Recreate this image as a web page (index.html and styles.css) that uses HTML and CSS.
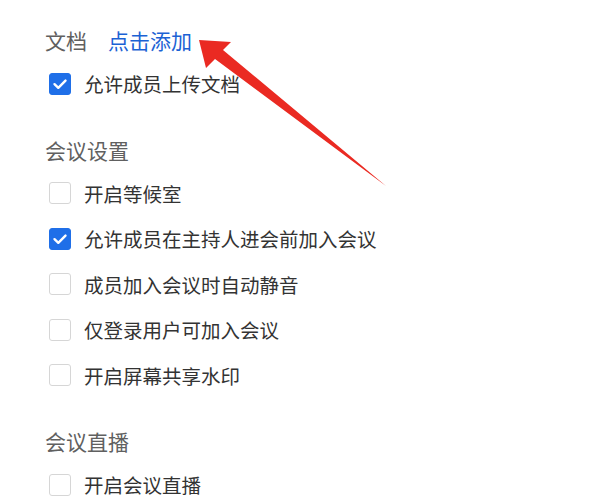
FILE: index.html
```html
<!DOCTYPE html>
<html lang="zh-CN">
<head>
<meta charset="utf-8">
<title>会议设置</title>
<link rel="stylesheet" href="styles.css">
</head>
<body>
<div class="page">
  <section class="section">
    <div class="section-title">文档<a class="add-link">点击添加</a></div>
    <label class="option"><span class="box checked"><svg viewBox="0 0 22 22" width="22" height="22"><path d="M5.5 11.2 L9.3 14.8 L16.5 7.6" fill="none" stroke="#fff" stroke-width="2.4" stroke-linecap="round" stroke-linejoin="round"/></svg></span>允许成员上传文档</label>
  </section>
  <section class="section">
    <div class="section-title">会议设置</div>
    <label class="option"><span class="box"></span>开启等候室</label>
    <label class="option"><span class="box checked"><svg viewBox="0 0 22 22" width="22" height="22"><path d="M5.5 11.2 L9.3 14.8 L16.5 7.6" fill="none" stroke="#fff" stroke-width="2.4" stroke-linecap="round" stroke-linejoin="round"/></svg></span>允许成员在主持人进会前加入会议</label>
    <label class="option"><span class="box"></span>成员加入会议时自动静音</label>
    <label class="option"><span class="box"></span>仅登录用户可加入会议</label>
    <label class="option"><span class="box"></span>开启屏幕共享水印</label>
  </section>
  <section class="section">
    <div class="section-title">会议直播</div>
    <label class="option"><span class="box"></span>开启会议直播</label>
  </section>
  <svg class="arrow" width="600" height="498" viewBox="0 0 600 498">
    <polygon points="199,40 231,42 223,50 386,186 215,59 206,68" fill="#ea2a22"/>
  </svg>
</div>
</body>
</html>
```

FILE: styles.css
```css
html, body {
  margin: 0;
  padding: 0;
  background: #fff;
}
body {
  font-family: "Noto Sans CJK SC", "Noto Sans", sans-serif;
  width: 600px;
  height: 498px;
  overflow: hidden;
}
.page {
  position: relative;
  padding: 20px 0 0 45px;
  height: 478px;
}
.section + .section {
  margin-top: 23px;
}
.section-title {
  height: 40px;
  line-height: 40px;
  font-size: 21px;
  color: #606060;
  margin-bottom: 1px;
}
.add-link {
  color: #1b62d4;
  margin-left: 21px;
}
.option {
  display: flex;
  align-items: center;
  height: 45.5px;
  font-size: 19.5px;
  color: #333;
  padding-left: 4px;
}
.box {
  width: 22px;
  height: 22px;
  box-sizing: border-box;
  border: 1px solid #d6d6d6;
  border-radius: 3px;
  margin-right: 13px;
  display: flex;
  background: #fff;
}
.box.checked {
  background: #1f6fe8;
  border-color: #1f6fe8;
}
.box svg {
  margin: -1px;
}
.arrow {
  position: absolute;
  left: 0;
  top: 0;
}
```
